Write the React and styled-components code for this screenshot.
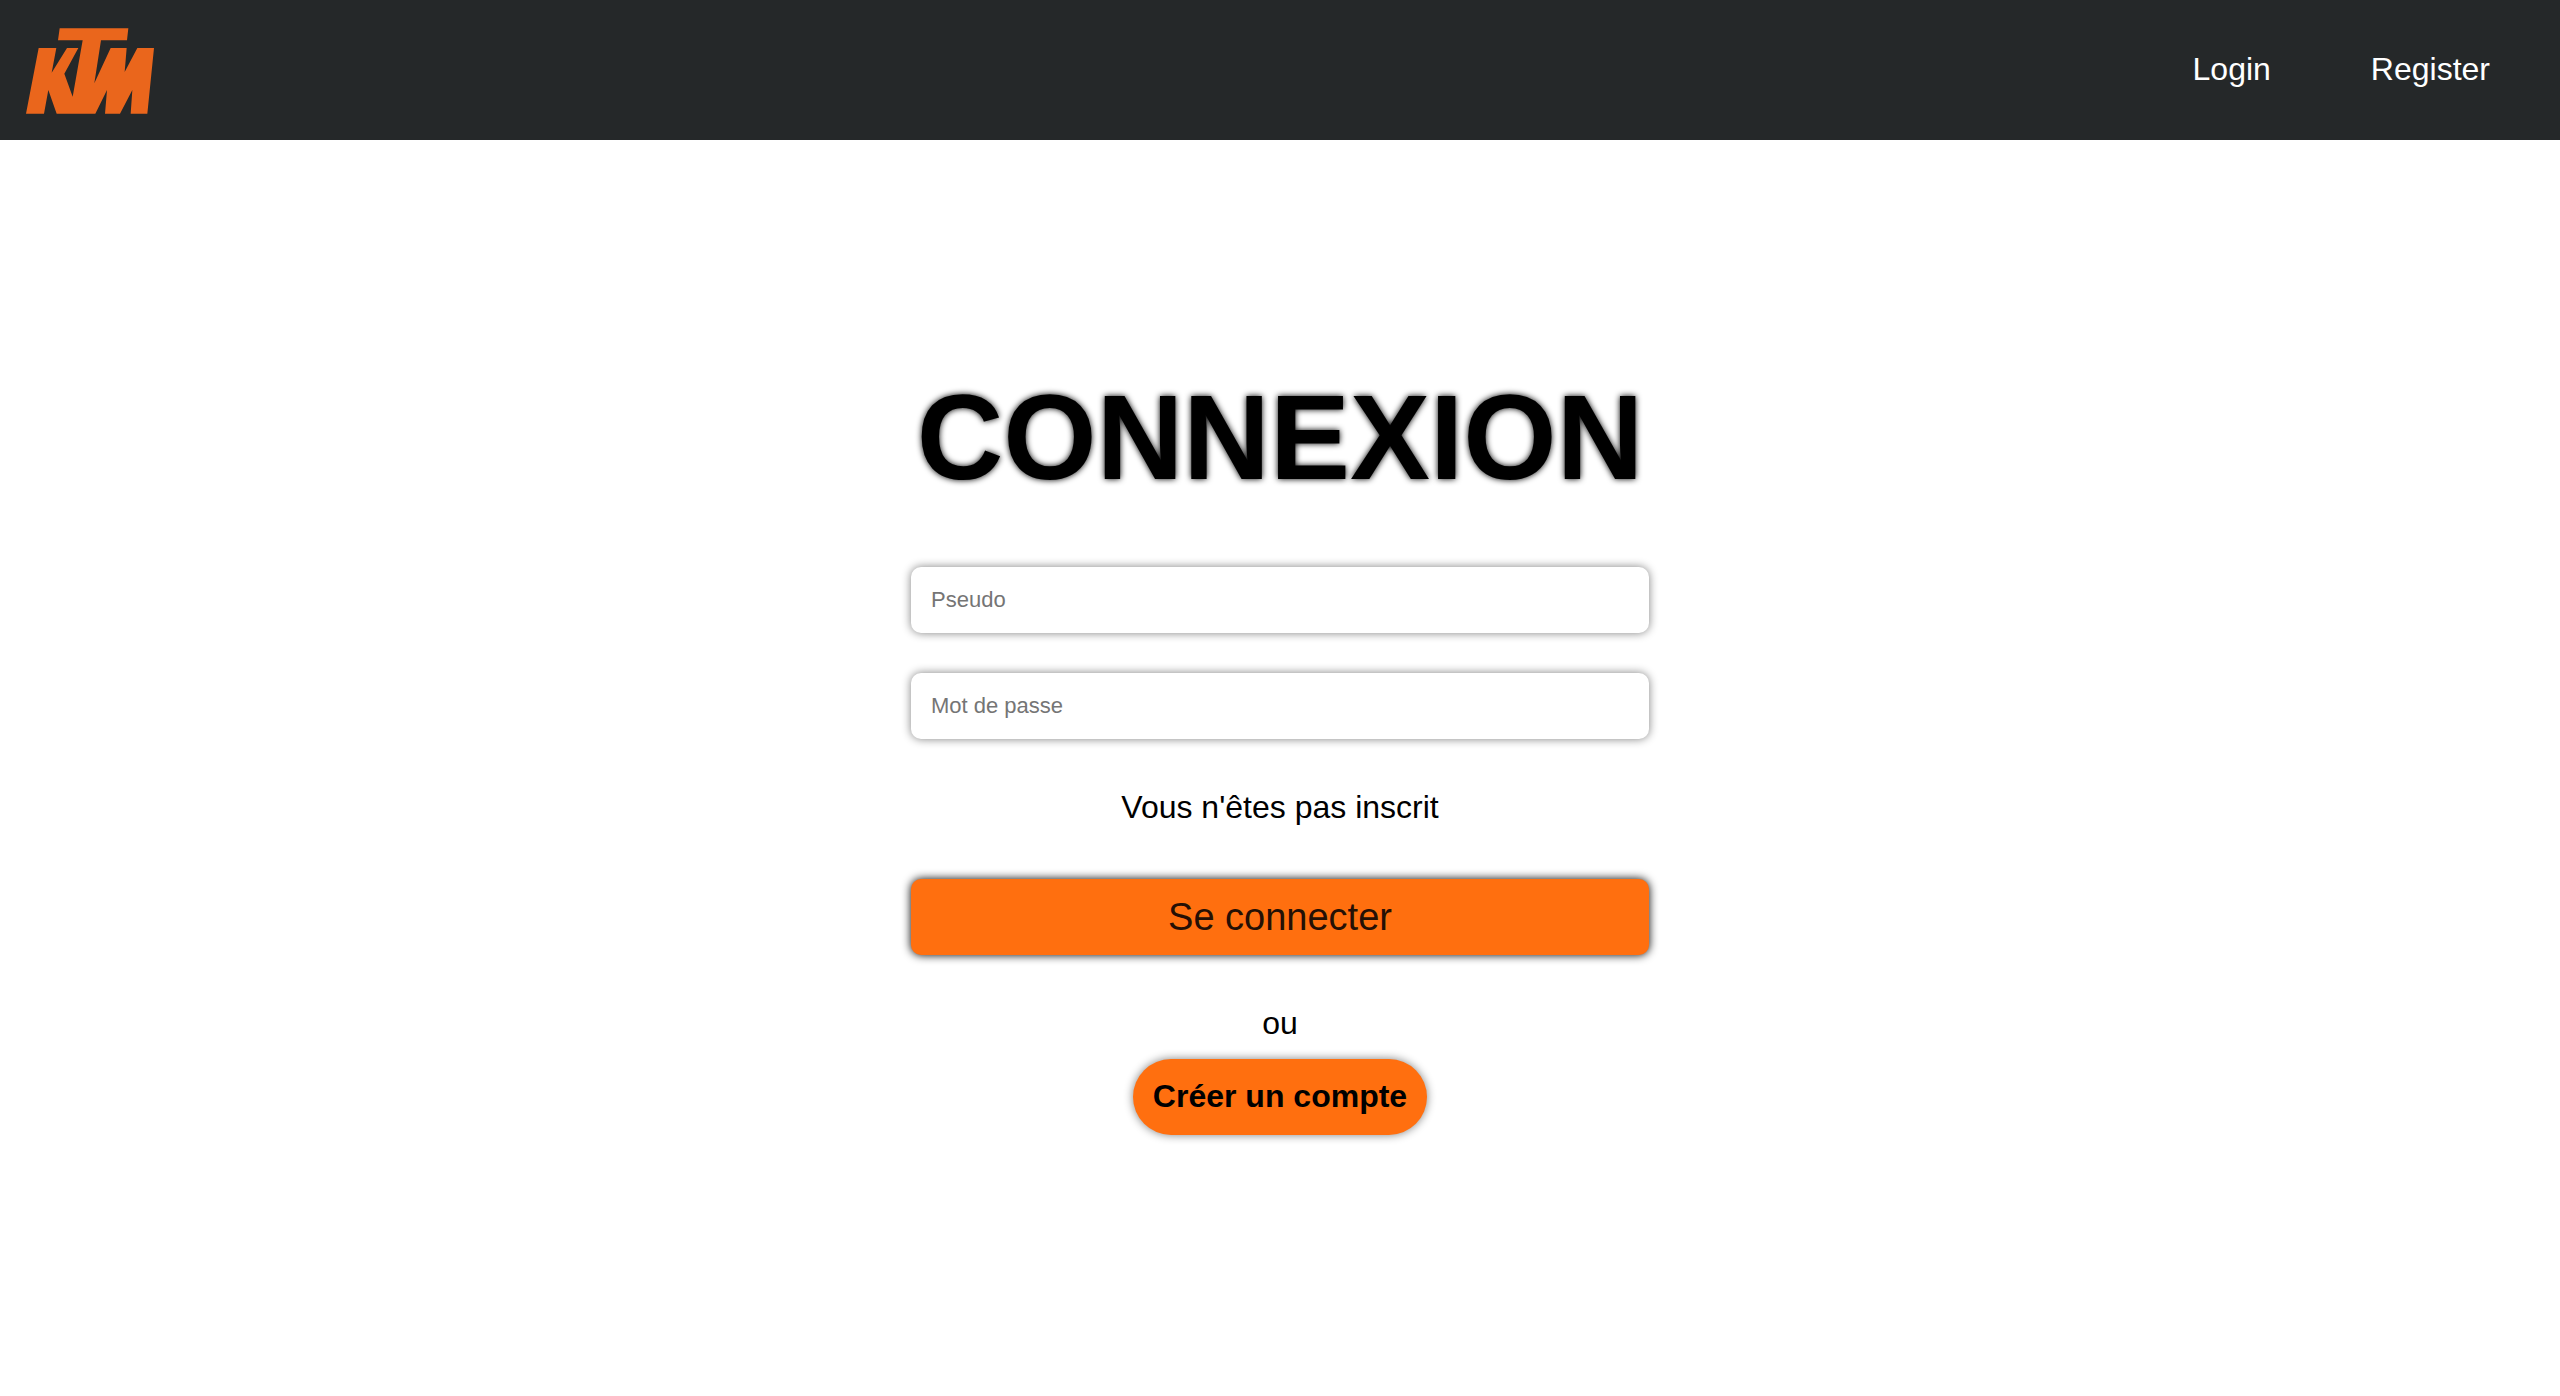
import styled, { createGlobalStyle } from "styled-components";

const Logo = () => {
      return (
            <svg viewBox="80 81 387 261" width="129" height="87" aria-hidden="true">
                  <path
                        fill="#ea661c"
                        d="M118 144H171L157 218L203 144H237L195 221L220 290L250 121H176L181 85H387L383 121H305L285 250L334 144H382L376 216L414 144H464L444 341H394L399 270L362 341H317L323 270L288 341H172L147 270L134 341H80Z"
                  />
            </svg>
      );
};

const Navbar = () => {
      return (
            <StyledNavbar>
                  <a href="/" aria-label="KTM">
                        <Logo />
                  </a>
                  <ul>
                        <li><a href="/login">Login</a></li>
                        <li><a href="/register">Register</a></li>
                  </ul>
            </StyledNavbar>
      );
};

const App = () => {
      return (
            <>
                  <GlobalStyle />
                  <Navbar />
                  <Main>
                        <Form onSubmit={(e) => e.preventDefault()}>
                              <Title>CONNEXION</Title>
                              <Field type="text" name="pseudo" placeholder="Pseudo" aria-label="Pseudo" />
                              <Field type="password" name="password" placeholder="Mot de passe" aria-label="Mot de passe" />
                              <Message>Vous n'êtes pas inscrit</Message>
                              <Submit type="submit">Se connecter</Submit>
                              <Separator>ou</Separator>
                              <RegisterLink href="/register">Créer un compte</RegisterLink>
                        </Form>
                  </Main>
            </>
      );
};

export default App;

const GlobalStyle = createGlobalStyle`
      * {
            margin: 0;
            padding: 0;
            box-sizing: border-box;
      }

      body {
            background: #fff;
            color: #000;
            font-family: "Liberation Sans", Arial, sans-serif;
            font-size: 32px;
            line-height: 40px;
      }

      a {
            color: inherit;
            text-decoration: none;
      }
`;

const StyledNavbar = styled.nav`
      display: flex;
      align-items: center;
      justify-content: space-between;
      min-height: 140px;
      padding: 0 70px 0 26px;
      background: #252829;
      color: #fff;

      svg {
            display: block;
      }

      ul {
            display: flex;
            gap: 100px;
            padding-bottom: 2px;
            list-style: none;
      }
`;

const Main = styled.main`
      display: flex;
      justify-content: center;
      padding: 237px 20px 80px;
`;

const Form = styled.form`
      display: flex;
      flex-direction: column;
      align-items: center;
      width: 100%;
      max-width: 738px;
`;

const Title = styled.h1`
      margin-bottom: 70px;
      font-size: 120px;
      line-height: 120px;
      text-shadow: 0 0 6px #000;
`;

const Field = styled.input`
      width: 100%;
      height: 66px;
      margin-bottom: 40px;
      padding: 0 20px;
      border: none;
      border-radius: 10px;
      background: #fff;
      box-shadow: 0 0 10px gray;
      font-family: inherit;
      font-size: 22px;

      &::placeholder {
            color: #757575;
      }
`;

const Message = styled.p`
      margin: 8px 0 52px;
`;

const Submit = styled.button`
      width: 100%;
      height: 76px;
      border: none;
      border-radius: 10px;
      background: #ff6f0f;
      box-shadow: 0 0 10px #000;
      color: #251005;
      font-family: inherit;
      font-size: 38px;
      cursor: pointer;
`;

const Separator = styled.p`
      margin: 48px 0 16px;
`;

const RegisterLink = styled.a`
      padding: 17px 20px 19px;
      border-radius: 40px;
      background: #ff6f0f;
      box-shadow: 0 0 10px gray;
      font-weight: bold;
`;
